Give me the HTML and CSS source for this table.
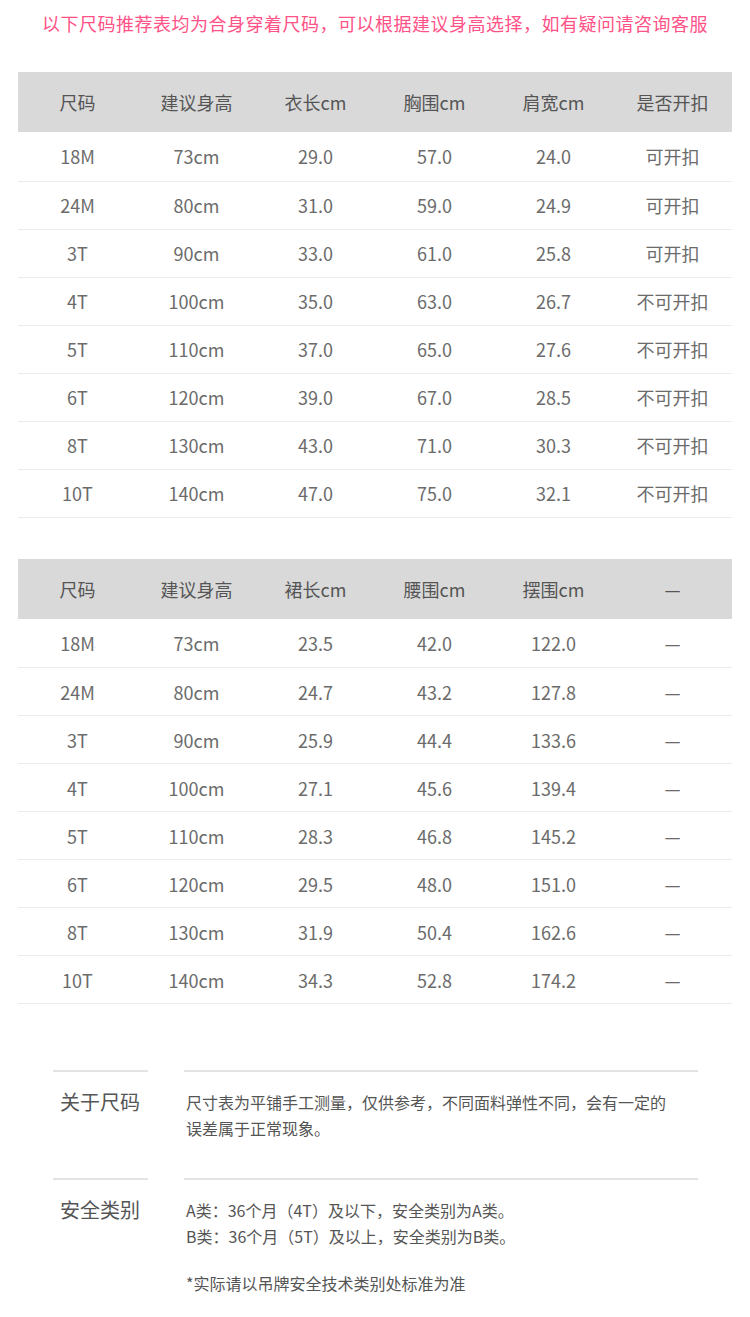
FILE: index.html
```html
<!DOCTYPE html>
<html lang="zh-CN">
<head>
<meta charset="utf-8">
<title>尺码表</title>
<link rel="stylesheet" href="styles.css">
</head>
<body>
<div class="page">
  <p class="notice">以下尺码推荐表均为合身穿着尺码，可以根据建议身高选择，如有疑问请咨询客服</p>

  <table class="size-table first">
    <thead>
      <tr><th>尺码</th><th>建议身高</th><th>衣长cm</th><th>胸围cm</th><th>肩宽cm</th><th>是否开扣</th></tr>
    </thead>
    <tbody>
      <tr><td>18M</td><td>73cm</td><td>29.0</td><td>57.0</td><td>24.0</td><td>可开扣</td></tr>
      <tr><td>24M</td><td>80cm</td><td>31.0</td><td>59.0</td><td>24.9</td><td>可开扣</td></tr>
      <tr><td>3T</td><td>90cm</td><td>33.0</td><td>61.0</td><td>25.8</td><td>可开扣</td></tr>
      <tr><td>4T</td><td>100cm</td><td>35.0</td><td>63.0</td><td>26.7</td><td>不可开扣</td></tr>
      <tr><td>5T</td><td>110cm</td><td>37.0</td><td>65.0</td><td>27.6</td><td>不可开扣</td></tr>
      <tr><td>6T</td><td>120cm</td><td>39.0</td><td>67.0</td><td>28.5</td><td>不可开扣</td></tr>
      <tr><td>8T</td><td>130cm</td><td>43.0</td><td>71.0</td><td>30.3</td><td>不可开扣</td></tr>
      <tr><td>10T</td><td>140cm</td><td>47.0</td><td>75.0</td><td>32.1</td><td>不可开扣</td></tr>
    </tbody>
  </table>

  <table class="size-table second">
    <thead>
      <tr><th>尺码</th><th>建议身高</th><th>裙长cm</th><th>腰围cm</th><th>摆围cm</th><th>—</th></tr>
    </thead>
    <tbody>
      <tr><td>18M</td><td>73cm</td><td>23.5</td><td>42.0</td><td>122.0</td><td>—</td></tr>
      <tr><td>24M</td><td>80cm</td><td>24.7</td><td>43.2</td><td>127.8</td><td>—</td></tr>
      <tr><td>3T</td><td>90cm</td><td>25.9</td><td>44.4</td><td>133.6</td><td>—</td></tr>
      <tr><td>4T</td><td>100cm</td><td>27.1</td><td>45.6</td><td>139.4</td><td>—</td></tr>
      <tr><td>5T</td><td>110cm</td><td>28.3</td><td>46.8</td><td>145.2</td><td>—</td></tr>
      <tr><td>6T</td><td>120cm</td><td>29.5</td><td>48.0</td><td>151.0</td><td>—</td></tr>
      <tr><td>8T</td><td>130cm</td><td>31.9</td><td>50.4</td><td>162.6</td><td>—</td></tr>
      <tr><td>10T</td><td>140cm</td><td>34.3</td><td>52.8</td><td>174.2</td><td>—</td></tr>
    </tbody>
  </table>

  <div class="info">
    <div class="info-row about">
      <div class="info-label">关于尺码</div>
      <div class="info-text">
        <p>尺寸表为平铺手工测量，仅供参考，不同面料弹性不同，会有一定的<br>误差属于正常现象。</p>
      </div>
    </div>
    <div class="info-row safety">
      <div class="info-label">安全类别</div>
      <div class="info-text">
        <p>A类：36个月（4T）及以下，安全类别为A类。<br>B类：36个月（5T）及以上，安全类别为B类。</p>
        <p class="note">*实际请以吊牌安全技术类别处标准为准</p>
      </div>
    </div>
  </div>
</div>
</body>
</html>
```

FILE: styles.css
```css
* { box-sizing: border-box; }

html, body {
  margin: 0;
  padding: 0;
  background: #ffffff;
}

body {
  font-family: "Noto Sans CJK SC", "Noto Sans", sans-serif;
  color: #666666;
}

.page {
  width: 750px;
  height: 1317px;
  overflow: hidden;
}

.notice {
  margin: 0;
  height: 46px;
  line-height: 46px;
  text-align: center;
  font-size: 18px;
  letter-spacing: 0.5px;
  color: #ff5287;
  white-space: nowrap;
}

.size-table {
  width: 714px;
  margin-left: 18px;
  border-collapse: collapse;
  table-layout: fixed;
}

.size-table.first { margin-top: 26px; }
.size-table.second { margin-top: 41px; }

.size-table th {
  height: 60px;
  padding: 0;
  background: #d9d9d9;
  font-weight: normal;
  font-size: 18px;
  color: #555555;
  text-align: center;
  vertical-align: middle;
}

.size-table td {
  height: 48px;
  padding: 0;
  border-bottom: 1px solid #ececec;
  font-size: 18px;
  color: #6b6b6b;
  text-align: center;
  vertical-align: middle;
}

.size-table tbody tr:first-child td { height: 49px; }

.info {
  margin-top: 66px;
  padding-left: 53px;
}

.info-row {
  display: grid;
  grid-template-columns: 95px 514px;
  column-gap: 36px;
}

.info-row.about { height: 108px; }

.info-label {
  border-top: 2px solid #e3e3e3;
  padding-top: 14px;
  padding-left: 7px;
  font-size: 20px;
  line-height: 32px;
  color: #555555;
}

.info-text {
  border-top: 2px solid #e3e3e3;
  padding-top: 17px;
  padding-left: 2px;
  font-size: 16px;
  line-height: 26px;
  color: #555555;
}

.info-text p { margin: 0; }

.info-text .note { margin-top: 21px; }
```
